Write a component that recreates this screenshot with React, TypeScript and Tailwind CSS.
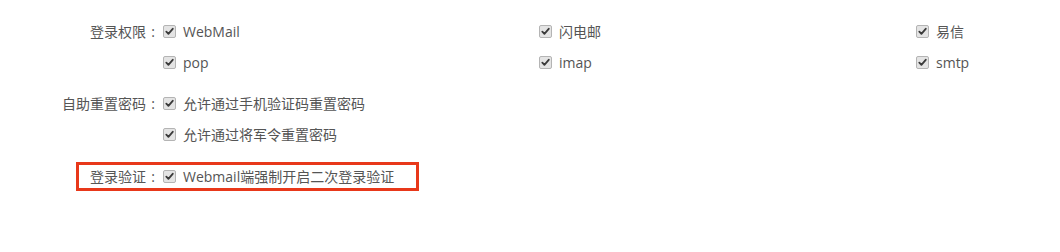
const Check = () => (
  <span className="flex h-[13px] w-[13px] flex-shrink-0 items-center justify-center rounded-[2px] border border-[#b4b4b4] bg-[#e4e4e4]">
    <svg className="h-[9px] w-[9px]" viewBox="0 0 10 10" fill="none" aria-hidden>
      <path d="M1.5 5.2l2.3 2.4L8.6 2" stroke="#3a3a3a" strokeWidth={2} strokeLinecap="round" strokeLinejoin="round" />
    </svg>
  </span>
);

const Opt = ({ text }: { text: string }) => (
  <div className="flex items-center gap-[7px] whitespace-nowrap">
    <Check />
    <span>{text}</span>
  </div>
);

const Label = ({ text, width }: { text?: string; width: string }) => (
  <div className={`flex flex-shrink-0 justify-end ${width}`}>
    {text && (
      <>
        <span>{text}</span>
        <span className="w-[14px] text-center">:</span>
      </>
    )}
  </div>
);

const Row = ({ label, items }: { label?: string; items: string[] }) => (
  <div className="flex h-[31px] items-center">
    <Label text={label} width="w-[160px]" />
    <div className="ml-[3px] grid flex-shrink-0 grid-cols-[376px_377px_200px]">
      {items.map((t) => (
        <Opt key={t} text={t} />
      ))}
    </div>
  </div>
);

export default function App() {
  return (
    <div
      className="h-[252px] w-[1060px] overflow-hidden bg-white pt-[16px] text-[14px] text-[#555]"
      style={{ fontFamily: '"Open Sans", "Noto Sans CJK SC", sans-serif' }}
    >
      <Row label="登录权限" items={['WebMail', '闪电邮', '易信']} />
      <Row items={['pop', 'imap', 'smtp']} />
      <div className="mt-[10px]">
        <Row label="自助重置密码" items={['允许通过手机验证码重置密码']} />
        <Row items={['允许通过将军令重置密码']} />
      </div>
      <div className="ml-[76px] mt-[12px] flex h-[29px] w-[343px] items-center border-[3px] border-[#e8381a]">
        <Label text="登录验证" width="w-[81px]" />
        <div className="ml-[3px]">
          <Opt text="Webmail端强制开启二次登录验证" />
        </div>
      </div>
    </div>
  );
}
